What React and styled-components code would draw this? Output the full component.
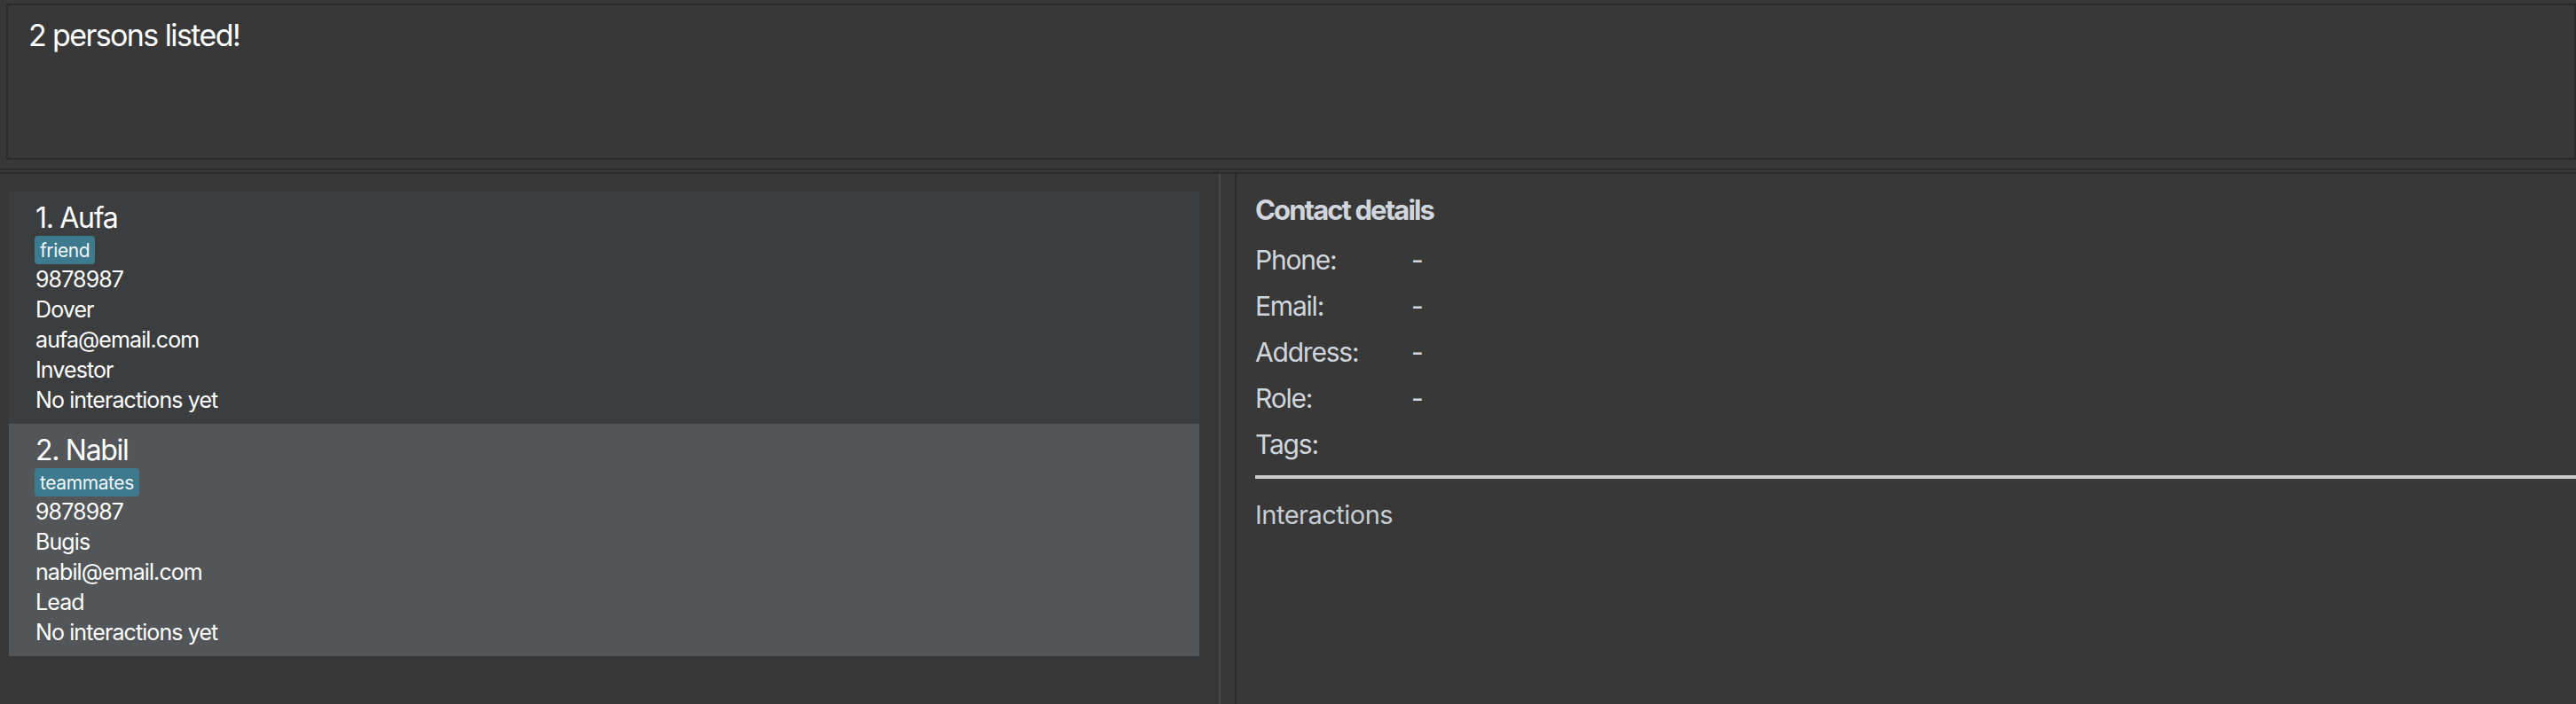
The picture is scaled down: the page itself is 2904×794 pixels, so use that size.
import React from "react";
import styled, { createGlobalStyle } from "styled-components";

const persons = [
  {
    name: "Aufa",
    tags: ["friend"],
    phone: "9878987",
    address: "Dover",
    email: "aufa@email.com",
    role: "Investor"
  },
  {
    name: "Nabil",
    tags: ["teammates"],
    phone: "9878987",
    address: "Bugis",
    email: "nabil@email.com",
    role: "Lead"
  }
];

const details = ["Phone:", "Email:", "Address:", "Role:", "Tags:"];

const App = () => {
  return (
    <>
      <GlobalStyle />
      <Window>
        <ResultBox>2 persons listed!</ResultBox>
        <SplitPane>
          <Panes>
            <ListPane>
              {persons.map((p, i) => (
                <Card key={p.name} selected={i === 1}>
                  <Name>
                    {i + 1}. {p.name}
                  </Name>
                  <Tags>
                    {p.tags.map(t => (
                      <Tag key={t}>{t}</Tag>
                    ))}
                  </Tags>
                  <Line>{p.phone}</Line>
                  <Line>{p.address}</Line>
                  <Line>{p.email}</Line>
                  <Line>{p.role}</Line>
                  <Line>No interactions yet</Line>
                </Card>
              ))}
            </ListPane>
            <Divider />
            <DetailPane>
              <Title>Contact details</Title>
              {details.map(label => (
                <DetailRow key={label}>
                  <Label>{label}</Label>
                  {label !== "Tags:" && <Value>-</Value>}
                </DetailRow>
              ))}
              <Rule />
              <Interactions>Interactions</Interactions>
            </DetailPane>
          </Panes>
        </SplitPane>
      </Window>
    </>
  );
};

export default App;

const GlobalStyle = createGlobalStyle`
  html, body {
    margin: 0;
    padding: 0;
    background: #383838;
    overflow: hidden;
  }
  body {
    font-family: "Inter", "Noto Sans", sans-serif;
  }
`;

const Window = styled.div`
  display: flex;
  flex-direction: column;
  height: 794px;
  background: #383838;
  padding-top: 4px;
  box-sizing: border-box;
`;

const ResultBox = styled.div`
  height: 176px;
  margin-left: 7px;
  box-sizing: border-box;
  border: 2px solid #2b2b2b;
  padding: 13px 0 0 23px;
  color: #ffffff;
  font-size: 34px;
  line-height: 42px;
  letter-spacing: -1.6px;
`;

const SplitPane = styled.div`
  flex: 1;
  display: flex;
  flex-direction: column;
  margin-top: 10px;
  border-top: 2px solid #2b2b2b;
  padding-top: 2px;
  min-height: 0;
`;

const Panes = styled.div`
  flex: 1;
  display: flex;
  border-top: 2px solid #2b2b2b;
  min-height: 0;
`;

const ListPane = styled.div`
  width: 1374px;
  flex: none;
  box-sizing: border-box;
  padding: 20px 22px 0 10px;
  display: flex;
  flex-direction: column;
`;

const Divider = styled.div`
  width: 16px;
  flex: none;
  border-left: 2px solid #4a4a4a;
`;

const Card = styled.div`
  background: ${p => (p.selected ? "#525659" : "#3c3d3f")};
  padding: 10px 0 10px 30px;
  color: #ffffff;
`;

const Name = styled.div`
  font-size: 32px;
  line-height: 40px;
  letter-spacing: -1.3px;
`;

const Tags = styled.div`
  display: flex;
  gap: 6px;
  height: 32px;
`;

const Tag = styled.span`
  display: flex;
  align-items: center;
  height: 32px;
  margin-left: -1px;
  padding: 0 6px;
  border-radius: 4px;
  background: #3d7a8e;
  color: #f2f6f8;
  font-size: 21px;
  letter-spacing: -0.4px;
`;

const Line = styled.div`
  font-size: 25px;
  line-height: 34px;
  letter-spacing: -0.9px;
`;

const DetailPane = styled.div`
  flex: 1;
  border-left: 2px solid #2b2b2b;
  padding: 21px 0 0 21px;
  color: #d0d6dc;
`;

const Title = styled.div`
  font-size: 31px;
  font-weight: 700;
  line-height: 40px;
  letter-spacing: -1.9px;
  margin-bottom: 10px;
`;

const DetailRow = styled.div`
  display: flex;
  height: 52px;
  font-size: 30px;
  line-height: 52px;
  letter-spacing: -1.2px;
`;

const Label = styled.span`
  width: 176px;
  flex: none;
`;

const Value = styled.span``;

const Rule = styled.div`
  height: 4px;
  margin-top: 9px;
  background: #cbcbcb;
`;

const Interactions = styled.div`
  margin-top: 23px;
  font-size: 29px;
  line-height: 36px;
  letter-spacing: -0.5px;
  color: #c6ccd2;
`;
